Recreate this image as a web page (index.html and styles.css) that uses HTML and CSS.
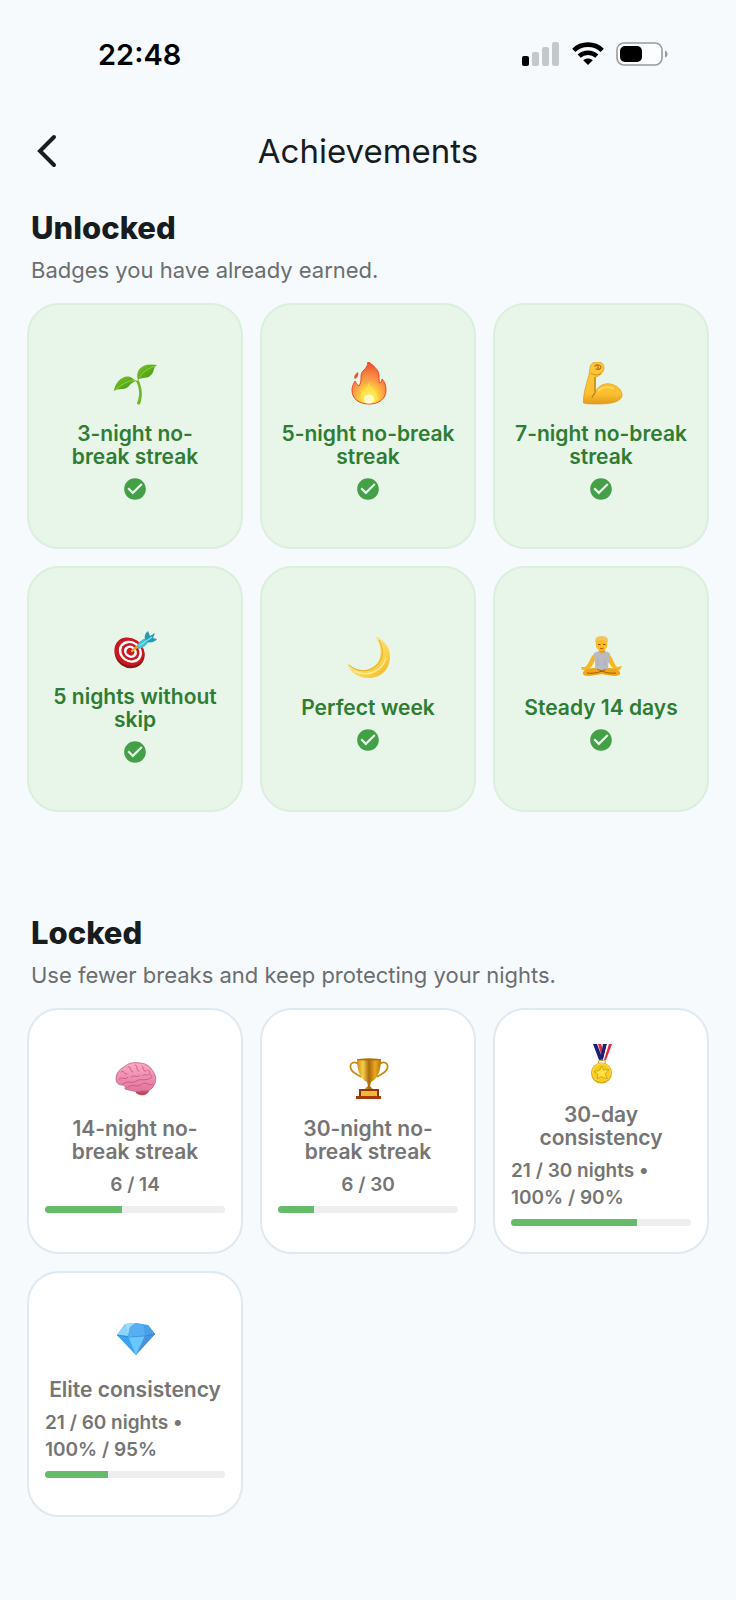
FILE: index.html
```html
<!DOCTYPE html>
<html lang="en">
<head>
  <meta charset="UTF-8" />
  <meta name="viewport" content="width=device-width, initial-scale=1.0"/>
  <title>Achievements</title>
  <link rel="stylesheet" href="styles.css">
</head>
<body>
  <div class="status-bar">
    <span class="time">22:48</span>
    <div class="status-icons">
      <svg width="38" height="24" viewBox="0 0 38 24" aria-hidden="true">
        <rect x="0" y="14" width="7" height="10" rx="2" fill="#000"/>
        <rect x="10" y="10" width="7" height="14" rx="2" fill="#c3c8ca"/>
        <rect x="20" y="5" width="7" height="19" rx="2" fill="#c3c8ca"/>
        <rect x="30" y="0" width="7" height="24" rx="2" fill="#c3c8ca"/>
      </svg>
      <svg width="32" height="24" viewBox="0 0 32 24" aria-hidden="true">
        <path d="M1.8 8.3C9.6 .7 22.4 .7 30.2 8.3" fill="none" stroke="#000" stroke-width="4.6"/>
        <path d="M7.2 14.2C12 9.6 20 9.6 24.8 14.2" fill="none" stroke="#000" stroke-width="4.4"/>
        <path d="M11.2 18.2C13.9 15.8 18.1 15.8 20.8 18.2L16 23Z" fill="#000"/>
      </svg>
      <svg width="52" height="24" viewBox="0 0 52 24" aria-hidden="true">
        <rect x="1" y="1" width="45" height="22" rx="7" fill="#fbfdff" stroke="#989b9d" stroke-width="1.6"/>
        <rect x="4" y="4" width="22" height="16" rx="5" fill="#000"/>
        <path d="M49 8.4C52.4 9.4 52.4 14.6 49 15.6Z" fill="#989b9d"/>
      </svg>
    </div>
  </div>

  <header class="header">
    <button class="back-btn" type="button" aria-label="Back">
      <svg width="22" height="34" viewBox="0 0 22 34">
        <path d="M18 3L4 17L18 31" fill="none" stroke="#171c1f" stroke-width="4" stroke-linecap="round" stroke-linejoin="miter"/>
      </svg>
    </button>
    <h1>Achievements</h1>
  </header>

  <main>
    <section>
      <h2>Unlocked</h2>
      <p class="subtitle">Badges you have already earned.</p>

      <div class="grid">
        <div class="card unlocked">
          <svg class="emoji" viewBox="0 0 44 44" aria-hidden="true">
            <defs>
              <linearGradient id="leaf" x1="0" y1="0" x2="1" y2="1">
                <stop offset="0" stop-color="#7cc72c"/>
                <stop offset="1" stop-color="#3f900c"/>
              </linearGradient>
            </defs>
            <path d="M23 19C27 27 27 34 24 41C24 43 27 43 27.5 41C30 33 29 25 25.5 18Z" fill="#72b52c"/>
            <path d="M1 29C2 19 12 11 19 16C21 17.5 22 19 25 19C20 19 18 22 15 25C11 28.5 5 26 1 29Z" fill="url(#leaf)"/>
            <path d="M25 18C22 9 28 0 44 3C40 5 42 10 37 14C33 17 28 15 25 18Z" fill="url(#leaf)"/>
            <path d="M3 27C9 23 14 18 23 18.5M26 16C30 9 35 7 42 4" fill="none" stroke="#97d950" stroke-width=".8"/>
          </svg>
          <h3>3-night no-<br>break streak</h3>
          <svg class="check" viewBox="0 0 24 24" role="img" aria-label="Earned"><path d="M12 2C6.48 2 2 6.48 2 12s4.48 10 10 10 10-4.48 10-10S17.52 2 12 2zm-2 15l-5-5 1.41-1.41L10 14.17l7.59-7.59L19 8l-9 9z"/></svg>
        </div>

        <div class="card unlocked">
          <svg class="emoji" viewBox="0 0 44 44" aria-hidden="true">
            <defs>
              <radialGradient id="flame" cx=".5" cy=".88" r=".85">
                <stop offset="0" stop-color="#fff9a8"/>
                <stop offset=".25" stop-color="#ffdc3c"/>
                <stop offset=".55" stop-color="#fb9a45"/>
                <stop offset="1" stop-color="#ee4d2c"/>
              </radialGradient>
            </defs>
            <path d="M22 -1C26 3 33 7 33 14C33 17 33 20 33.5 21C36 20 36 18 36 17C39 20 40 24 40 28C40 37 33 42 23 42C13 42 6 37 6 28C6 24 8 21 9 19C10 21 11 23 13 24C17 18 13 14 17 9C20 6 22 4 22 -1Z" fill="url(#flame)" stroke="#ee4525" stroke-width="1"/>
            <path d="M12 10C13 14 11 16 9 17C7 15 9 12 12 10Z" fill="#f0532f"/>
            <path d="M23 20C24 26 31 28 31 34C31 39 27 41.5 23 41.5C18 41.5 14 38 15 33C16 28 22 26 23 20Z" fill="#ffe95a" opacity=".55"/>
            <ellipse cx="23" cy="37" rx="5" ry="4.5" fill="#fffcc8"/>
          </svg>
          <h3>5-night no-break<br>streak</h3>
          <svg class="check" viewBox="0 0 24 24" role="img" aria-label="Earned"><path d="M12 2C6.48 2 2 6.48 2 12s4.48 10 10 10 10-4.48 10-10S17.52 2 12 2zm-2 15l-5-5 1.41-1.41L10 14.17l7.59-7.59L19 8l-9 9z"/></svg>
        </div>

        <div class="card unlocked">
          <svg class="emoji" viewBox="0 0 44 44" aria-hidden="true">
            <defs>
              <linearGradient id="arm" x1="0" y1="0" x2="0" y2="1">
                <stop offset="0" stop-color="#fdc83a"/>
                <stop offset=".75" stop-color="#fcc02f"/>
                <stop offset="1" stop-color="#e39a1c"/>
              </linearGradient>
            </defs>
            <path d="M11 6C11 2 14 0 18 0C23 0 25 2 25 6C25 10 21 14 16.5 15L16 30C20 23 26 21 31 22C38 23 43 28 43 33C43 39 34 42 20 42C13 42 7 42 4.5 41C4 33 7 23 10 13C10 10 11 8 11 6Z" fill="url(#arm)" stroke="#dc9722" stroke-width=".7"/>
            <path d="M16 4C18 2 22 3 22 5C22 7 19 8 17 7M19 4V6" fill="none" stroke="#b66a13" stroke-width="1.2" stroke-linecap="round"/>
            <path d="M12 11C15 14 20 13 22 11" fill="none" stroke="#d58a18" stroke-width="1"/>
            <path d="M16 15V31C14 33 13 35 13 36" fill="none" stroke="#c27c17" stroke-width="1.2"/>
            <path d="M19 29C23 25 30 24 35 27" fill="none" stroke="#ffdd69" stroke-width="1.5"/>
          </svg>
          <h3>7-night no-break<br>streak</h3>
          <svg class="check" viewBox="0 0 24 24" role="img" aria-label="Earned"><path d="M12 2C6.48 2 2 6.48 2 12s4.48 10 10 10 10-4.48 10-10S17.52 2 12 2zm-2 15l-5-5 1.41-1.41L10 14.17l7.59-7.59L19 8l-9 9z"/></svg>
        </div>

        <div class="card unlocked">
          <svg class="emoji" viewBox="0 0 44 44" aria-hidden="true">
            <g transform="rotate(35 16 27)">
              <ellipse cx="17.5" cy="28" rx="15.5" ry="14" fill="#8c1518"/>
              <ellipse cx="16" cy="26.5" rx="15.5" ry="13.5" fill="#cb171e"/>
              <ellipse cx="17" cy="26" rx="12" ry="10.5" fill="#fff"/>
              <ellipse cx="17" cy="26" rx="9.5" ry="8.2" fill="#cb171e"/>
              <ellipse cx="17" cy="26" rx="6.8" ry="5.8" fill="#fff"/>
              <ellipse cx="17" cy="26" rx="4" ry="3.5" fill="#cb171e"/>
            </g>
            <path d="M19 26L25 21" stroke="#e1a72c" stroke-width="2.5" stroke-linecap="round"/>
            <path d="M24 21C25 17 29 14 34 13L36 16C34 20 30 23 26 24Z" fill="#42bfd0"/>
            <path d="M32 14C31 10 33 8 35 6L37 11L42 8L40 13L44 14C42 17 38 18 34 17Z" fill="#249db2"/>
            <path d="M26 21L39 12" stroke="#82e3e9" stroke-width="1.2"/>
          </svg>
          <h3>5 nights without<br>skip</h3>
          <svg class="check" viewBox="0 0 24 24" role="img" aria-label="Earned"><path d="M12 2C6.48 2 2 6.48 2 12s4.48 10 10 10 10-4.48 10-10S17.52 2 12 2zm-2 15l-5-5 1.41-1.41L10 14.17l7.59-7.59L19 8l-9 9z"/></svg>
        </div>

        <div class="card unlocked">
          <svg class="emoji" viewBox="0 0 44 44" aria-hidden="true">
            <defs>
              <linearGradient id="moon" x1="0" y1="0" x2="1" y2="1">
                <stop offset=".4" stop-color="#fbe27a"/>
                <stop offset=".7" stop-color="#fbd146"/>
                <stop offset="1" stop-color="#e9ac28"/>
              </linearGradient>
            </defs>
            <path d="M29 0C39 4 44 12 44 21C44 33 35 42 23 42C13 42 4 37 1 27C8 34 17 36 25 32C36 27 38 13 29 0Z" fill="url(#moon)"/>
            <path d="M3 29C13 37 23 36 30 30C38 23 38 13 33 4" fill="none" stroke="#d9a528" stroke-width=".8"/>
            <path d="M8 35C22 42 36 35 40 22" fill="none" stroke="#fde88c" stroke-width="1.5"/>
          </svg>
          <h3>Perfect week</h3>
          <svg class="check" viewBox="0 0 24 24" role="img" aria-label="Earned"><path d="M12 2C6.48 2 2 6.48 2 12s4.48 10 10 10 10-4.48 10-10S17.52 2 12 2zm-2 15l-5-5 1.41-1.41L10 14.17l7.59-7.59L19 8l-9 9z"/></svg>
        </div>

        <div class="card unlocked">
          <svg class="emoji" viewBox="0 0 44 44" aria-hidden="true">
            <path d="M15 18C11 21 11 27 6 31L2 31L3 34L9 34C14 30 15 26 17 22Z" fill="#f8b61f"/>
            <path d="M30 18C34 21 34 27 38 31L43 30L41 34L36 34C31 30 30 26 28 22Z" fill="#f8b61f"/>
            <path d="M16 32C9 32 3 34 4 38C5 41 13 40 22.5 38C32 40 40 41 41 38C42 34 36 32 29 32Z" fill="#efa61b"/>
            <path d="M8 37C15 38 22 36 27 33M18 33C24 36 31 38 37 37" fill="none" stroke="#9f5c0c" stroke-width="1"/>
            <path d="M20 12H26V18H20Z" fill="#e99b17"/>
            <path d="M15 17L20 15C21 18 25 18 26 15L31 17C31 23 29 27 29 32C25 34 20 34 16 32C17 27 15 23 15 17Z" fill="#b9bac2"/>
            <path d="M19 22V30M26 22V30" stroke="#a8a9b2" stroke-width=".8"/>
            <ellipse cx="22.5" cy="8" rx="5.8" ry="7" fill="#fcbc22"/>
            <path d="M16.5 7C15 1 19 0 23 0C28 0 30 3 28.5 7C27 3 21 5 19 4C18 5 17 6 16.5 7Z" fill="#efc463"/>
            <path d="M19 8.5H21.5M24 8.5H26.5M21 12C22 13 23.5 13 24.5 12" fill="none" stroke="#875009" stroke-width="1"/>
          </svg>
          <h3>Steady 14 days</h3>
          <svg class="check" viewBox="0 0 24 24" role="img" aria-label="Earned"><path d="M12 2C6.48 2 2 6.48 2 12s4.48 10 10 10 10-4.48 10-10S17.52 2 12 2zm-2 15l-5-5 1.41-1.41L10 14.17l7.59-7.59L19 8l-9 9z"/></svg>
        </div>
      </div>
    </section>

    <section>
      <h2>Locked</h2>
      <p class="subtitle">Use fewer breaks and keep protecting your nights.</p>

      <div class="grid">
        <div class="card locked">
          <svg class="emoji" viewBox="0 0 44 44" aria-hidden="true">
            <defs>
              <linearGradient id="brain" x1="0" y1="0" x2="0" y2="1">
                <stop offset="0" stop-color="#fbaac6"/>
                <stop offset="1" stop-color="#e0739a"/>
              </linearGradient>
            </defs>
            <path d="M25 33C28 31 34 31 36 33C36 37 31 39 27 38C23 37 21 35 25 33Z" fill="#b94d5c"/>
            <path d="M3 22C3 16 7 12 11 10C15 6 21 5 26 6C32 6 37 9 39 13C43 17 44 24 41 28C39 33 34 35 29 34C24 36 17 33 12 32C13 29 11 28 9 28C5 28 3 25 3 22Z" fill="url(#brain)" stroke="#c9557d" stroke-width=".8"/>
            <path d="M10 27C16 22 18 28 23 24C28 21 34 25 39 20M14 31C20 25 24 32 29 27C33 24 36 30 40 27M8 15C12 12 10 18 14 17M15 10C19 8 16 15 20 15M22 8C26 8 22 14 26 14M29 9C32 10 28 14 33 14M35 13C38 14 35 18 39 19M6 22C10 19 12 24 15 20M18 20C22 17 24 22 27 18M29 19C31 16 34 20 36 17" fill="none" stroke="#cb5884" stroke-width=".9" stroke-linecap="round"/>
          </svg>
          <h3>14-night no-<br>break streak</h3>
          <p class="meta">6 / 14</p>
          <div class="progress" role="progressbar" aria-label="14-night streak" aria-valuenow="6" aria-valuemax="14"><div class="fill" style="width: 43%"></div></div>
        </div>

        <div class="card locked">
          <svg class="emoji" viewBox="0 0 44 44" aria-hidden="true">
            <defs>
              <linearGradient id="gold" x1="0" y1="0" x2="1" y2="0">
                <stop offset="0" stop-color="#d08a12"/>
                <stop offset=".25" stop-color="#f8d04a"/>
                <stop offset=".5" stop-color="#a76908"/>
                <stop offset=".75" stop-color="#e9a81d"/>
                <stop offset="1" stop-color="#b77509"/>
              </linearGradient>
            </defs>
            <path d="M13 7C7 3 3 7 5 12C7 17 12 17 15 20M33 7C39 3 43 7 41 12C39 17 34 17 31 20" fill="none" stroke="#c98a14" stroke-width="1.8"/>
            <path d="M11 2H35C35 13 32 22 25 25L24 29L29 34H16L22 29L21 25C14 22 11 13 11 2Z" fill="url(#gold)"/>
            <ellipse cx="23" cy="2.5" rx="12" ry="1.2" fill="#ad710b"/>
            <path d="M13 32H33V40H13Z" fill="#93330f"/>
            <path d="M15 34H31V39H15Z" fill="#edb83c"/>
            <path d="M10 39H35V42H10Z" fill="#a8390f"/>
          </svg>
          <h3>30-night no-<br>break streak</h3>
          <p class="meta">6 / 30</p>
          <div class="progress" role="progressbar" aria-label="30-night streak" aria-valuenow="6" aria-valuemax="30"><div class="fill" style="width: 20%"></div></div>
        </div>

        <div class="card locked">
          <svg class="emoji" viewBox="0 0 44 44" aria-hidden="true">
            <path d="M19 1H27L23 17H20Z" fill="#f3e9ec"/>
            <path d="M19 1H22L25 10L23 15Z" fill="#e32a3e"/>
            <path d="M14 1H18L24 17H20Z" fill="#1b1f74"/>
            <path d="M24 1H28L24 18H21Z" fill="#1b1f74"/>
            <path d="M28 1H30L25 17H24Z" fill="#fff"/>
            <path d="M30 1H33L27 17H25Z" fill="#e32a3e"/>
            <ellipse cx="23" cy="19" rx="3.5" ry="1.8" fill="none" stroke="#d9b45b" stroke-width="1.2"/>
            <circle cx="22.5" cy="30" r="10.5" fill="#d9a514"/>
            <circle cx="22.5" cy="29.5" r="9.5" fill="#fbe04a"/>
            <circle cx="22.5" cy="29.7" r="8.5" fill="#f6cb1f"/>
            <path d="M22.5 23L24.5 27L30 26.500L26 31L28.500 36L22.500 33.500L18 36L19 31L15 28.500L20.500 27.500Z" fill="#ffe23f" stroke="#c99518" stroke-width=".7"/>
          </svg>
          <h3>30-day<br>consistency</h3>
          <p class="meta">21 / 30 nights •<br>100% / 90%</p>
          <div class="progress" role="progressbar" aria-label="30-day consistency" aria-valuenow="21" aria-valuemax="30"><div class="fill" style="width: 70%"></div></div>
        </div>

        <div class="card locked">
          <svg class="emoji" viewBox="0 0 44 44" aria-hidden="true">
            <path d="M4 17L12 6L23 5L35 7L42 16L23 37Z" fill="#3fa4f0"/>
            <path d="M12 6L15 18L4 17Z" fill="#8bd4fb"/>
            <path d="M12 6L23 5L17 9L15 18Z" fill="#9fdcff"/>
            <path d="M17 9L23 5L31 8L32 18L15 18Z" fill="#57aff2"/>
            <path d="M31 8L35 7L42 16L32 18Z" fill="#4a9fe8"/>
            <path d="M4 17L15 18L23 37Z" fill="#3da3ee"/>
            <path d="M15 18H32L23 37Z" fill="#68c8fb"/>
            <path d="M32 18L42 16L23 37Z" fill="#4a92dc"/>
            <path d="M4 17L15 19L32 18L42 16" fill="none" stroke="#2f80cc" stroke-width=".7"/>
          </svg>
          <h3>Elite consistency</h3>
          <p class="meta">21 / 60 nights •<br>100% / 95%</p>
          <div class="progress" role="progressbar" aria-label="Elite consistency" aria-valuenow="21" aria-valuemax="60"><div class="fill" style="width: 35%"></div></div>
        </div>
      </div>
    </section>
  </main>
</body>
</html>
```
FILE: styles.css
```css
* {
  box-sizing: border-box;
}

body {
  margin: 0;
  background: #f6fafd;
  color: #171c1f;
  font-family: Inter, "Liberation Sans", sans-serif;
}

h1, h2, h3, p {
  margin: 0;
}

.status-bar {
  display: flex;
  align-items: center;
  justify-content: space-between;
  height: 108px;
  padding: 0 68px 0 98px;
  color: #000;
}

.time {
  font-size: 29px;
  font-weight: 600;
}

.status-icons {
  display: flex;
  gap: 12px;
}

.header {
  display: grid;
  grid-template-columns: 46px 1fr 46px;
  align-items: center;
  height: 86px;
  padding: 0 24px;
}

.header h1 {
  font-size: 33px;
  line-height: 44px;
  font-weight: 400;
  text-align: center;
}

.back-btn {
  display: flex;
  align-items: center;
  justify-content: center;
  height: 48px;
  padding: 0;
  border: none;
  background: none;
  cursor: pointer;
}

main {
  padding: 16px 27px 84px;
}

section + section {
  margin-top: 103px;
}

h2 {
  margin-bottom: 10px;
  padding: 0 4px;
  font-size: 31px;
  line-height: 36px;
  font-weight: 800;
}

.subtitle {
  margin-bottom: 19px;
  padding: 0 4px;
  font-size: 22px;
  line-height: 28px;
  color: #6b6e70;
}

.grid {
  display: grid;
  grid-template-columns: repeat(3, 1fr);
  gap: 17px;
}

.card {
  display: flex;
  flex-direction: column;
  align-items: center;
  justify-content: center;
  gap: 8px;
  aspect-ratio: 216 / 246;
  padding: 0 16px;
  border: 2px solid;
  border-radius: 32px;
}

.card h3 {
  font-size: 21px;
  line-height: 23px;
  font-weight: 600;
  text-align: center;
  white-space: nowrap;
}

.unlocked {
  background: #e8f5e9;
  border-color: #dceede;
  color: #2e7d32;
}

.locked {
  padding-bottom: 4px;
  background: #fff;
  border-color: #e0e8f0;
  color: #757575;
}

.emoji {
  width: 44px;
  height: 44px;
  margin: 11px 0 8px;
}

.check {
  width: 26px;
  height: 26px;
  fill: #43a047;
}

.meta {
  font-size: 19px;
  line-height: 27px;
  font-weight: 600;
}

/* two-line details start at the left edge of the bar */
.meta:has(br) {
  align-self: flex-start;
}

.progress {
  width: 100%;
  height: 7px;
  border-radius: 4px;
  background: #eeeeee;
  overflow: hidden;
}

.fill {
  height: 100%;
  background: #66bb6a;
}
```
